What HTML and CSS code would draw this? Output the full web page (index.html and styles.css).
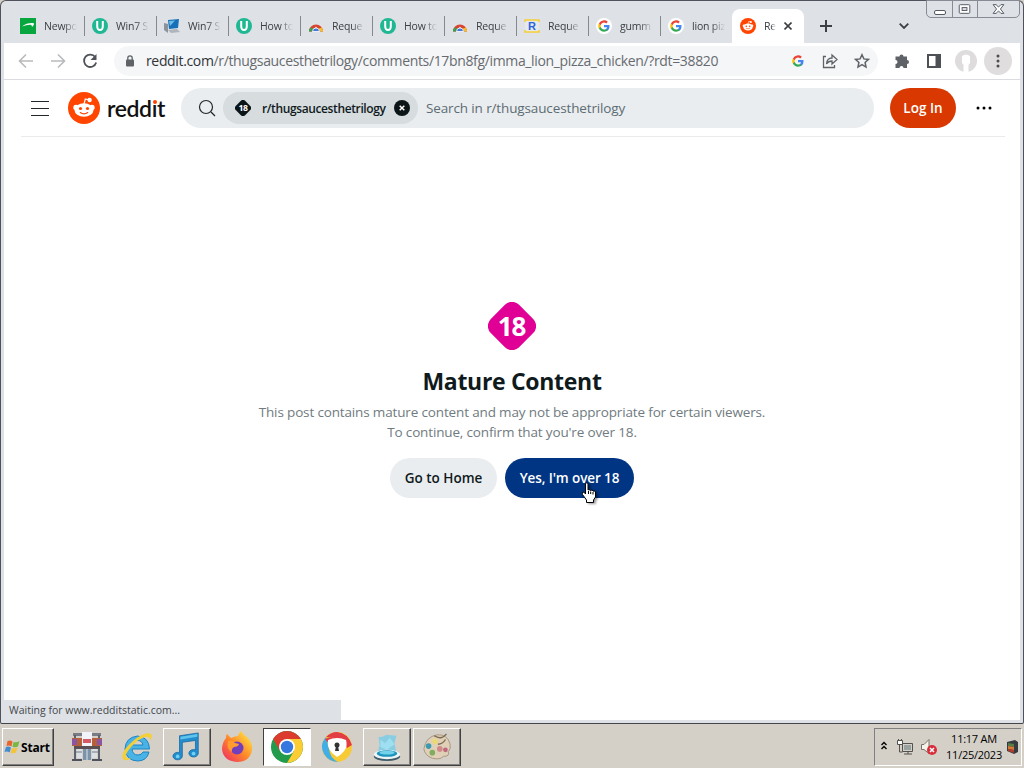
FILE: index.html
```html
<!DOCTYPE html>
<html lang="en">
<head>
  <meta charset="UTF-8">
  <meta name="viewport" content="width=device-width, initial-scale=1.0">
  <title>Reddit - Mature Content</title>
  <link rel="stylesheet" href="styles.css">
</head>
<body>
  <!-- Shared icons -->
  <svg class="sprite" width="0" height="0">
    <symbol id="google" viewBox="0 0 24 24">
      <path fill="#4285f4" d="M23 12.3c0-.8-.1-1.5-.2-2.3H12v4.5h6.200c-.3 1.400-1.100 2.600-2.300 3.400v2.900h3.700c2.200-2 3.400-5 3.400-8.500z"/>
      <path fill="#34a853" d="M12 23.500c3.100 0 5.700-1 7.600-2.800l-3.700-2.900c-1 .7-2.300 1.100-3.900 1.100-3 0-5.500-2-6.400-4.700H1.800v3c1.900 3.700 5.700 6.300 10.200 6.300z"/>
      <path fill="#fbbc05" d="M5.600 14.200a7 7 0 0 1 0-4.400v-3H1.800a11.500 11.500 0 0 0 0 10.400z"/>
      <path fill="#ea4335" d="M12 5.100c1.700 0 3.200.6 4.400 1.700l3.300-3.300A11.500 11.500 0 0 0 1.800 6.800l3.800 3C6.500 7.100 9 5.100 12 5.100z"/>
    </symbol>
    <symbol id="snoo" viewBox="0 0 32 32">
      <circle cx="16" cy="16" r="16" fill="#ff4500"/>
      <g fill="#fff">
        <circle cx="8" cy="15.500" r="2.700"/>
        <circle cx="24" cy="15.500" r="2.700"/>
        <ellipse cx="16" cy="18" rx="9.500" ry="6.800"/>
        <circle cx="21.600" cy="8" r="2.200"/>
      </g>
      <path d="M16 12l1.300-5 4 1" fill="none" stroke="#fff" stroke-width="1.200"/>
      <circle cx="12.500" cy="16.500" r="1.600" fill="#ff4500"/>
      <circle cx="19.500" cy="16.500" r="1.600" fill="#ff4500"/>
      <path d="M12.300 20.600q3.700 2.600 7.400 0" fill="none" stroke="#ff4500" stroke-width="1.200" stroke-linecap="round"/>
    </symbol>
    <symbol id="green-u" viewBox="0 0 16 16">
      <circle cx="8" cy="8" r="8" fill="#1fb893"/>
      <path d="M5.200 3v5.500a2.800 3.600 0 0 0 5.600 0V3" fill="none" stroke="#fff" stroke-width="2"/>
    </symbol>
    <symbol id="arch" viewBox="0 0 16 16">
      <path d="M1 13.500a7 7 0 0 1 14 0h-3l-4-5-4 5z" fill="#d8452f"/>
      <path d="M1 13.500q0-2 1.300-4L6 11l-2 2.500z" fill="#3d9c50"/>
      <path d="M13.700 9.500q1.300 2 1.300 4h-3.500L10 11z" fill="#f4bd2b"/>
      <path d="M4.500 13.500a3.500 3.500 0 0 1 7 0z" fill="#4778d9" stroke="#fff" stroke-width=".8"/>
    </symbol>
    <symbol id="badge18" viewBox="0 0 48 48">
      <rect x="4" y="4" width="40" height="40" rx="10" transform="rotate(45 24 24)"/>
    </symbol>
  </svg>

  <div class="window">
    <div class="tab-strip">
      <div class="tab">
        <svg class="favicon" viewBox="0 0 16 16"><path d="M0 0h16v16H0z" fill="#07a63e"/><path d="M2 8.500Q7 4.500 14 5.200q.5 1.800-2 3.800.2-2-1.500-2.200Q7 6.600 2 8.500z" fill="#fff"/></svg>
        <span class="tab-title">Newpo</span>
      </div>
      <div class="tab"><svg class="favicon"><use href="#green-u"/></svg><span class="tab-title">Win7 S</span></div>
      <div class="tab">
        <svg class="favicon" viewBox="0 0 16 16"><path d="M0 5l4 1v9l-4-3z" fill="#8b9299"/><path d="M4 2l11-1-1 9-9 1z" fill="#1671b8"/><path d="M5 3l6-.5L6 8z" fill="#72bde8"/><path d="M4 12l9-1 3 3-9 1z" fill="#aeb5bb"/></svg>
        <span class="tab-title">Win7 S</span>
      </div>
      <div class="tab"><svg class="favicon"><use href="#green-u"/></svg><span class="tab-title">How to</span></div>
      <div class="tab"><svg class="favicon"><use href="#arch"/></svg><span class="tab-title">Reque</span></div>
      <div class="tab"><svg class="favicon"><use href="#green-u"/></svg><span class="tab-title">How to</span></div>
      <div class="tab"><svg class="favicon"><use href="#arch"/></svg><span class="tab-title">Reque</span></div>
      <div class="tab">
        <svg class="favicon" viewBox="0 0 16 16"><path d="M1 2h14v12H1z" fill="#e7e8ea"/><path d="M1 4V2h14v2M1 12v2h14v-2" fill="none" stroke="#f5cf38" stroke-width="1.500"/><text x="4" y="12" class="r-letter">R</text></svg>
        <span class="tab-title">Reque</span>
      </div>
      <div class="tab"><span class="favicon disc"><svg width="12" height="12"><use href="#google"/></svg></span><span class="tab-title">gumm</span></div>
      <div class="tab no-line"><span class="favicon disc"><svg width="12" height="12"><use href="#google"/></svg></span><span class="tab-title">lion piz</span></div>
      <div class="tab active">
        <svg class="favicon"><use href="#snoo"/></svg>
        <span class="tab-title">Re</span>
        <svg class="tab-close" viewBox="0 0 8 8"><path d="M.5.5l7 7m0-7l-7 7"/></svg>
      </div>
      <svg class="new-tab" viewBox="0 0 12 12"><path d="M6 0v12M0 6h12"/></svg>
      <svg class="tab-search" viewBox="0 0 10 6"><path d="M.7.7L5 5 9.300.7"/></svg>
      <div class="controls">
        <svg width="25" height="17" viewBox="0 0 25 17"><rect x="7.500" y="9.500" width="11" height="4" rx="1.500" fill="#fff" stroke="#555963"/></svg>
        <svg width="25" height="17" viewBox="0 0 25 17"><rect x="6.500" y="3.500" width="11" height="9" rx="1" fill="#fff" stroke="#555963"/><rect x="9.500" y="6.500" width="5" height="3" fill="#dee1e6" stroke="#555963"/></svg>
        <svg width="42" height="17" viewBox="0 0 42 17"><path d="M15.500 3.500h3l2.500 2.500 2.500-2.500h3L23 8l3.500 4.500h-3L21 10l-2.500 2.500h-3L19 8z" fill="#fff" stroke="#555963"/></svg>
      </div>
    </div>

    <div class="toolbar">
      <svg class="nav-icon dim" viewBox="0 0 16 16"><path d="M15 8H2M8 1.500L1.500 8 8 14.500"/></svg>
      <svg class="nav-icon dim" viewBox="0 0 16 16"><path d="M1 8h13M8 1.500L14.500 8 8 14.500"/></svg>
      <svg class="nav-icon reload" viewBox="0 0 16 16"><path d="M13.200 4A6.200 6.200 0 1 0 14.200 9.500"/><path d="M14.500 1v6h-6z" class="solid"/></svg>
      <div class="address">
        <svg class="lock" viewBox="0 0 10 12"><rect x="1" y="4.500" width="8" height="7" rx="1" fill="#5f6368"/><path d="M2.800 5V3a2.200 2.200 0 0 1 4.400 0v2" fill="none" stroke="#5f6368" stroke-width="1.300"/></svg>
        <span class="url"><b>reddit.com</b>/r/thugsaucesthetrilogy/comments/17bn8fg/imma_lion_pizza_chicken/?rdt=38820</span>
        <svg width="12" height="12"><use href="#google"/></svg>
        <svg class="line-icon" viewBox="0 0 16 16"><path d="M4 3.500H1.500v11h11V12M4.500 11q.5-6 5.500-6V2l5 4.500-5 4.500V8q-3.500 0-5.500 3z"/></svg>
        <svg class="line-icon star" viewBox="0 0 16 16"><path d="M8 1.700l1.900 4.200 4.600.5-3.400 3.100.9 4.600-4-2.400-4 2.400.9-4.600-3.400-3.100 4.600-.5z"/></svg>
      </div>
      <svg class="ext" viewBox="0 0 16 16"><path fill="#5f6368" d="M2 3.500h3.500a2 2 0 1 1 4 0H13v3.500a2 2 0 1 1 0 4v4H9.500a2 2 0 0 0-4 0H1.500v-4a2 2 0 0 0 0-4V3.500z"/></svg>
      <svg class="panel" viewBox="0 0 14 14"><rect x="1" y="1" width="12" height="12" fill="none" stroke="#4d5156" stroke-width="2"/><path d="M8.500 1H13v12H8.500z" fill="#4d5156"/></svg>
      <svg class="avatar" viewBox="0 0 22 22"><circle cx="11" cy="11" r="11" fill="#dedcdc"/><path d="M7 6q4-3 8 0v7l-1.500 2v7h-5v-7L7 13z" fill="#fff"/></svg>
      <svg class="menu" viewBox="0 0 28 28"><circle cx="14" cy="14" r="14" fill="#dfdddd"/><g fill="#4a4d51"><circle cx="14" cy="9" r="1.500"/><circle cx="14" cy="14" r="1.500"/><circle cx="14" cy="19" r="1.500"/></g></svg>
    </div>

    <div class="page">
      <header class="header">
        <svg class="burger" viewBox="0 0 18 16"><path d="M0 1.500h18M0 8.500h18M0 15.500h18"/></svg>
        <svg class="logo"><use href="#snoo"/></svg>
        <span class="wordmark">redd<span class="dot-i">ı</span>t</span>
        <div class="search">
          <svg class="search-icon" viewBox="0 0 18 18"><circle cx="8" cy="8" r="6.500"/><path d="M13 13l4 4"/></svg>
          <div class="chip">
            <svg class="chip-badge" viewBox="0 0 48 48"><use href="#badge18"/><text x="24" y="33" class="badge-text">18</text></svg>
            <span class="chip-label">r/thugsaucesthetrilogy</span>
            <svg class="chip-close" viewBox="0 0 16 16"><circle cx="8" cy="8" r="8" fill="#0b1416"/><path d="M5.700 5.700l4.600 4.600m0-4.600l-4.600 4.600" stroke="#fff" stroke-width="1.500"/></svg>
          </div>
          <span class="placeholder">Search in r/thugsaucesthetrilogy</span>
        </div>
        <button class="btn login">Log In</button>
        <svg class="more" viewBox="0 0 16 4"><circle cx="2" cy="2" r="1.500"/><circle cx="8" cy="2" r="1.500"/><circle cx="14" cy="2" r="1.500"/></svg>
      </header>

      <main class="gate">
        <svg class="mature" viewBox="0 0 48 48"><use href="#badge18"/><text x="23.500" y="34" class="badge-text">18</text></svg>
        <h1>Mature Content</h1>
        <p class="line-one">This post contains mature content and may not be appropriate for certain viewers.</p>
        <p>To continue, confirm that you're over 18.</p>
        <div class="actions">
          <button class="btn home">Go to Home</button>
          <button class="btn confirm">Yes, I'm over 18</button>
        </div>
      </main>
      <div class="status">Waiting for www.redditstatic.com...</div>
    </div>
  </div>

  <div class="taskbar">
    <div class="start">
      <svg width="17" height="16" viewBox="0 0 16 16"><path d="M3 2q3-1 5 .5L7 7.500Q4.500 6 2 7z" fill="#e8642d"/><path d="M9 3q3 1 6-1l-1.500 5.500Q11 9 8 7.800z" fill="#77b844"/><path d="M1.500 8Q4 7 6.500 8.500l-1.300 5Q3 12 0 13z" fill="#438cd0"/><path d="M7.500 9Q10 10 13 8.500l-1.500 5q-3 1.500-5.300.3z" fill="#f5c338"/></svg>
      <b>Start</b>
    </div>
    <div class="task">
      <svg viewBox="0 0 32 32"><path d="M2 2h28v3H2z" fill="#777c85"/><path d="M4 4v24M28 4v24" stroke="#5c6371" stroke-width="2"/><path d="M1 7h30v8H1z" fill="#b4603a"/><path d="M1 8h5v6H1zM26 8h5v6h-5z" fill="#8b55a2"/><path d="M11 1h10v14H11z" fill="#f3f3fa"/><path d="M12 8h8v4h-8z" fill="#d45b66"/><path d="M3 15h26v3H3z" fill="#5a4f52"/><path d="M12 18h8v11h-8z" fill="#7c93aa"/><path d="M16 18v11" stroke="#a9bccb" stroke-width="2"/><path d="M6 18h5v9H6zM21 18h5v9h-5z" fill="#dbe0e5"/><path d="M5 21h6M21 21h6" stroke="#777c85"/><path d="M1 29h10M21 29h10" stroke="#50535e" stroke-width="2"/></svg>
    </div>
    <div class="task">
      <svg viewBox="0 0 32 32"><path d="M28.500 18H11q.5 6 6 6 3.500 0 5-3h6Q26 30 16.500 30 5 29.500 4 18 4.500 6.500 16.500 5 28 6 28.500 18zM11.500 14H22q-1-4.500-5.300-4.500T11.500 14z" fill="#49b3e6" fill-rule="evenodd" stroke="#1c84c4"/><path d="M2 28Q-1 21 12 10 24 0 30 3q2 2-1 7 0-5-5-4-7 2-14 10-6 7-5 10 1 2 5 1-5 4-8 1z" fill="#f4cf35"/></svg>
    </div>
    <div class="task raised">
      <svg viewBox="0 0 32 32"><path d="M8 4l20-3v22a5 4 0 1 1-3-4V9l-14 2v15a5 4 0 1 1-3-4z" fill="#238ccd" stroke="#1467a2" stroke-width=".8"/><path d="M9 5l18-3v3L9 8z" fill="#5fc4ed"/><circle cx="6" cy="26" r="2" fill="#6fd0f2"/><circle cx="23" cy="23" r="2" fill="#6fd0f2"/></svg>
    </div>
    <div class="task">
      <svg viewBox="0 0 32 32"><defs><linearGradient id="fox" x1="1" y1="0" x2="0" y2="1"><stop offset=".1" stop-color="#ffe045"/><stop offset=".5" stop-color="#ff8a28"/><stop offset="1" stop-color="#ed236b"/></linearGradient></defs><path d="M5 7q0-3 1-4l4 4q4-2 7-2 1-4 4-5 0 3 5 6 6 6 5 13-2 12-15 12Q2 30 1 18q0-6 4-11z" fill="url(#fox)"/><circle cx="16" cy="17" r="6.500" fill="#713fbd"/><path d="M7 10q5-1 7 2l4 1q-1 3-5 3-3 2-2 5-6-3-4-11z" fill="#ff9b2f"/></svg>
    </div>
    <div class="task pressed">
      <svg viewBox="0 0 32 32"><circle cx="16" cy="16" r="16" fill="#229b4c"/><path d="M2.150 8A16 16 0 0 1 29.850 8H16L9 20z" fill="#db3c2d"/><path d="M29.850 8A16 16 0 0 1 16 32l7-12-7-12z" fill="#fccd32"/><circle cx="16" cy="16" r="8" fill="#fff"/><circle cx="16" cy="16" r="6.200" fill="#3478df"/></svg>
    </div>
    <div class="task">
      <svg viewBox="0 0 32 32"><circle cx="16" cy="16" r="15" fill="#f7cb36"/><path d="M5 6Q10 1 16 1q11 1 15 13l-5 3-4-9z" fill="#e23d45"/><path d="M5 6Q-2 14 3 23q5 8 14 8-8-4-9-13l-2-9z" fill="#42aee7"/><path d="M4 8q5-3 12-1l7 2-13 6z" fill="#e23d45"/><path d="M7 9q9-4 18 0 3 10-9 17Q5 19 7 9z" fill="#fff"/><circle cx="16" cy="14" r="2.500" fill="#333"/><path d="M15 15h2l1 5h-4z" fill="#333"/></svg>
    </div>
    <div class="task raised">
      <svg viewBox="0 0 32 32"><path d="M7 5q5 1 8-2l11 1-2 8 2 10H6l2-8z" fill="#70ccec" opacity=".75"/><path d="M9 8l5 4 5-6 5 7-8 6-7-3z" fill="#a4e3f4" opacity=".8"/><ellipse cx="16" cy="26" rx="14" ry="5" fill="#405b68"/><ellipse cx="16" cy="24" rx="14" ry="5" fill="#eef5f7"/><ellipse cx="16" cy="23" rx="11" ry="3.500" fill="#1e94bd"/><ellipse cx="16" cy="22" rx="8" ry="2" fill="#73d3ea"/></svg>
    </div>
    <div class="task raised">
      <svg viewBox="0 0 32 32"><path d="M2 18Q4 5 16 3q11-1 14 10 1 5-2 8 2 5-5 5-4 4-12 2-8-3-9-10z" fill="#e0d0b8" stroke="#a6937e"/><circle cx="7" cy="15" r="3" fill="#3c9ab2"/><circle cx="14" cy="10" r="3" fill="#ead879"/><circle cx="11" cy="22" r="3" fill="#82ad61"/><circle cx="19" cy="18" r="3" fill="#d08a88"/><circle cx="25" cy="19" r="2.500" fill="#c0667d"/><path d="M13 4q8 5 13-2M17 13q5 0 8-5" fill="none" stroke="#7d6a52" stroke-width="1.500"/></svg>
    </div>
    <div class="tray">
      <svg class="chevrons" viewBox="0 0 6 9"><path d="M.5 4L3 1.500 5.500 4M.5 8L3 5.500 5.500 8"/></svg>
      <svg class="network" viewBox="0 0 16 16"><path d="M5.500 4.500h10v8h-10z" fill="#d4d0c8" stroke="#53514d"/><path d="M7 6h7v5H7z" fill="#98a2a0"/><path d="M7 15h8M11 12v3M2.500 5v8h3" fill="none" stroke="#53514d"/><path d="M.5 1.500h5v4h-5zM1.500 0v2M4.500 0v2" fill="#fff" stroke="#53514d"/></svg>
      <svg class="volume" viewBox="0 0 16 16"><path d="M.5 5.500H3l5-5v14l-5-4H.5z" fill="#f4f2ea" stroke="#77736b"/><circle cx="11" cy="11" r="5" fill="#d92c3a"/><path d="M9 9l4 4m0-4l-4 4" stroke="#fff" stroke-width="1.500"/></svg>
      <div class="clock"><span>11:17 AM</span><span>11/25/2023</span></div>
      <svg class="tray-box" viewBox="0 0 12 16"><path d="M1 3l8-2 3 2v10l-4 2-7-3z" fill="#363b42"/><path d="M2 4l6 1v3L2 7z" fill="#577d45"/><path d="M2 7l6 1v3l-6-1z" fill="#d87835"/><path d="M2 10l6 1v3l-6-2z" fill="#ad3e2d"/></svg>
    </div>
  </div>

  <svg class="cursor" viewBox="0 0 16 22"><path d="M4.500 1.500q1.500-1.500 2.500 0V8l1-.5 1.500 1 1.500-.5 1.300 1.200 1.500-.2.700 1V15l-2 3v2.500h-7V18l-4-5.500q-1-2 .5-2.500 1.500 0 2.500 2z" fill="#fff" stroke="#000"/><path d="M7.500 9v3M9.700 9.500V12M12 10v2.500" stroke="#000"/></svg>
</body>
</html>
```
FILE: styles.css
```css
* {
  margin: 0;
  padding: 0;
  box-sizing: border-box;
}
body {
  width: 1024px;
  height: 768px;
  overflow: hidden;
  background: #d4d0c8;
  font-family: "Open Sans", "Noto Sans", sans-serif;
}
svg {
  display: block;
  flex-shrink: 0;
}
.sprite {
  display: none;
}

/* Browser window */
.window {
  display: flex;
  flex-direction: column;
  height: 724px;
  background: #dee1e6;
  border: 1px solid #50515a;
  border-bottom-color: #44454c;
  border-radius: 6px 6px 2px 2px;
  padding: 0 3px 3px;
}
.tab-strip {
  display: flex;
  height: 42px;
  padding: 8px 0 0 8px;
}
.tab {
  display: flex;
  align-items: center;
  width: 72px;
  height: 34px;
  padding-left: 8px;
  gap: 8px;
}
.tab:not(.active):not(.no-line)::after {
  content: "";
  width: 1px;
  height: 20px;
  background: #85888e;
  flex-shrink: 0;
  margin-left: -1px;
}
.favicon {
  width: 16px;
  height: 16px;
  flex-shrink: 0;
}
.disc {
  display: flex;
  align-items: center;
  justify-content: center;
  background: #fff;
  border-radius: 50%;
}
.tab-title {
  width: 33px;
  overflow: hidden;
  white-space: nowrap;
  flex-shrink: 0;
  padding-bottom: 1px;
  font-size: 10.5px;
  letter-spacing: -0.2px;
  color: #3c4043;
  mask-image: linear-gradient(to right, #000 60%, transparent);
}
.r-letter {
  font: bold 11px "Liberation Sans", sans-serif;
  fill: #2764dd;
}
.active {
  background: #fff;
  border-radius: 8px 8px 0 0;
}
.active .tab-title {
  width: 12px;
}
.tab-close {
  width: 8px;
  height: 8px;
  stroke: #3c4043;
  stroke-width: 1.6;
}
.new-tab {
  width: 12px;
  height: 12px;
  margin: 11px 0 0 16px;
  stroke: #3c4043;
  stroke-width: 2;
}
.tab-search {
  width: 10px;
  height: 6px;
  margin: 14px 0 0 67px;
  fill: none;
  stroke: #3c4043;
  stroke-width: 1.8;
}
.controls {
  display: flex;
  height: 18px;
  margin: -9px 0 0 auto;
  border: 1px solid #888b93;
  border-radius: 0 0 5px 5px;
}
.controls svg + svg {
  border-left: 1px solid #888b93;
}

/* Toolbar */
.toolbar {
  display: flex;
  align-items: center;
  height: 37px;
  background: #fff;
  border-bottom: 1px solid #dadce0;
  padding-left: 14px;
}
.nav-icon {
  width: 16px;
  height: 16px;
  margin-right: 16px;
  fill: none;
  stroke: #4f5357;
  stroke-width: 1.8;
}
.dim {
  stroke: #b8babd;
  stroke-width: 1.6;
}
.solid {
  fill: #4f5357;
  stroke: none;
}
.address {
  display: flex;
  align-items: center;
  width: 764px;
  height: 30px;
  padding: 0 8px 0 11px;
  background: #f5f6f7;
  border-radius: 15px;
}
.lock {
  width: 10px;
  height: 12px;
}
.url {
  width: 636px;
  margin: 0 10px 0 11px;
  padding-bottom: 1px;
  font-size: 14px;
  letter-spacing: -0.35px;
  white-space: nowrap;
  color: #676b70;
}
.url b {
  font-weight: normal;
  color: #303338;
}
.line-icon {
  width: 16px;
  height: 16px;
  margin-left: 18px;
  fill: none;
  stroke: #5f6368;
  stroke-width: 1.3;
}
.star {
  margin-left: 16px;
  stroke-width: 1.5;
}
.ext {
  width: 16px;
  height: 16px;
  margin-left: 16px;
}
.panel {
  width: 14px;
  height: 14px;
  margin-left: 17px;
}
.avatar {
  width: 22px;
  height: 22px;
  margin-left: 14px;
}
.menu {
  width: 28px;
  height: 28px;
  margin-left: 7px;
}

/* Page */
.page {
  position: relative;
  flex: 1;
  background: #fff;
}
.header {
  display: flex;
  align-items: center;
  height: 57px;
  margin: 0 15px 0 17px;
  padding-left: 10px;
  border-bottom: 1px solid #e8eaec;
}
.burger {
  width: 18px;
  height: 16px;
  margin-right: 19px;
  stroke: #20282b;
  stroke-width: 1.2;
}
.logo {
  width: 32px;
  height: 32px;
}
.wordmark {
  width: 74px;
  margin-left: 7px;
  font: 600 23px/28px Lato, sans-serif;
  letter-spacing: -0.4px;
  color: #111;
}
.dot-i {
  position: relative;
}
.dot-i::before {
  content: "";
  position: absolute;
  left: 1px;
  top: 6px;
  width: 4px;
  height: 4px;
  border-radius: 50%;
  background: #ff4500;
}
.search {
  display: flex;
  align-items: center;
  width: 693px;
  height: 40px;
  padding-left: 17px;
  background: #eaedef;
  border-radius: 20px;
}
.search-icon {
  width: 18px;
  height: 18px;
  fill: none;
  stroke: #20282b;
  stroke-width: 1.2;
}
.chip {
  display: flex;
  align-items: center;
  width: 195px;
  height: 32px;
  margin-left: 7px;
  padding-left: 12px;
  background: #d7dcdf;
  border-radius: 16px;
}
.chip-badge {
  width: 16px;
  height: 16px;
  fill: #0b1416;
}
.chip-label {
  width: 132px;
  margin-left: 11px;
  font-size: 12px;
  font-weight: 600;
  letter-spacing: -0.38px;
  color: #0f1a1c;
}
.chip-close {
  width: 16px;
  height: 16px;
}
.placeholder {
  margin-left: 8px;
  font-size: 13.5px;
  letter-spacing: -0.13px;
  color: #5c6c74;
}
.btn {
  height: 40px;
  border: none;
  border-radius: 20px;
  font: 600 13.5px "Open Sans", sans-serif;
  white-space: nowrap;
  cursor: pointer;
}
.login {
  width: 66px;
  margin-left: 16px;
  background: #d93900;
  color: #fff;
}
.more {
  width: 16px;
  height: 4px;
  margin-left: 20px;
}

/* Age gate */
.gate {
  display: flex;
  flex-direction: column;
  align-items: center;
  padding-top: 165px;
  text-align: center;
}
.mature {
  width: 48px;
  height: 48px;
  fill: #e00095;
}
.badge-text {
  font: bold 26px "Noto Sans", sans-serif;
  text-anchor: middle;
  letter-spacing: -1px;
  fill: #fff;
}
.gate h1 {
  margin-top: 17px;
  font-size: 23px;
  font-weight: 700;
  letter-spacing: -0.3px;
  line-height: 28px;
  color: #0f1a1c;
}
.gate p {
  font-size: 13.5px;
  letter-spacing: -0.15px;
  line-height: 20px;
  color: #707b80;
}
.gate .line-one {
  margin-top: 7px;
}
.actions {
  display: flex;
  gap: 8px;
  margin-top: 16px;
}
.home {
  width: 107px;
  background: #eaedef;
  color: #0f1a1c;
}
.confirm {
  width: 129px;
  background: #003584;
  color: #fff;
  letter-spacing: -0.1px;
}
.status {
  position: absolute;
  left: 0;
  bottom: 0;
  width: 337px;
  height: 20px;
  padding-left: 5px;
  background: #dee1e6;
  font-size: 10.5px;
  line-height: 20px;
  color: #43474c;
}

/* Taskbar */
.taskbar {
  display: flex;
  height: 44px;
  padding: 4px 2px 2px;
  background: #d4d0c8;
}
.start,
.raised {
  border: 1px solid;
  border-color: #fff #404040 #404040 #fff;
  box-shadow: inset -1px -1px #808080;
}
.start {
  display: flex;
  align-items: center;
  width: 52px;
  padding-left: 1px;
  font-size: 12px;
  letter-spacing: -0.2px;
  margin-right: 9px;
}
.task {
  display: flex;
  align-items: center;
  justify-content: center;
  width: 48px;
  margin-right: 2px;
}
.task svg {
  width: 32px;
  height: 32px;
}
.task.raised svg {
  width: 30px;
  height: 30px;
}
.pressed {
  background: #fff;
  border: 1px solid;
  border-color: #404040 #fff #fff #404040;
}
.tray {
  display: flex;
  align-items: center;
  width: 148px;
  margin-left: auto;
  padding-left: 6px;
  border: 1px solid;
  border-color: #808080 #fff #fff #808080;
}
.chevrons {
  width: 6px;
  height: 9px;
  margin-bottom: 3px;
  fill: none;
  stroke: #000;
  stroke-width: 1.4;
}
.network {
  width: 16px;
  height: 16px;
  margin-left: 10px;
}
.volume {
  width: 16px;
  height: 16px;
  margin-left: 8px;
}
.clock {
  display: flex;
  flex-direction: column;
  align-items: center;
  width: 58px;
  margin-left: 8px;
  font-size: 11px;
  letter-spacing: -0.25px;
  line-height: 16px;
  white-space: nowrap;
}
.tray-box {
  width: 12px;
  height: 16px;
  margin-left: 3px;
}
.cursor {
  position: absolute;
  left: 581px;
  top: 482px;
  width: 16px;
  height: 22px;
  filter: drop-shadow(2px 1px 1px rgba(0, 0, 0, 0.4));
}
```
